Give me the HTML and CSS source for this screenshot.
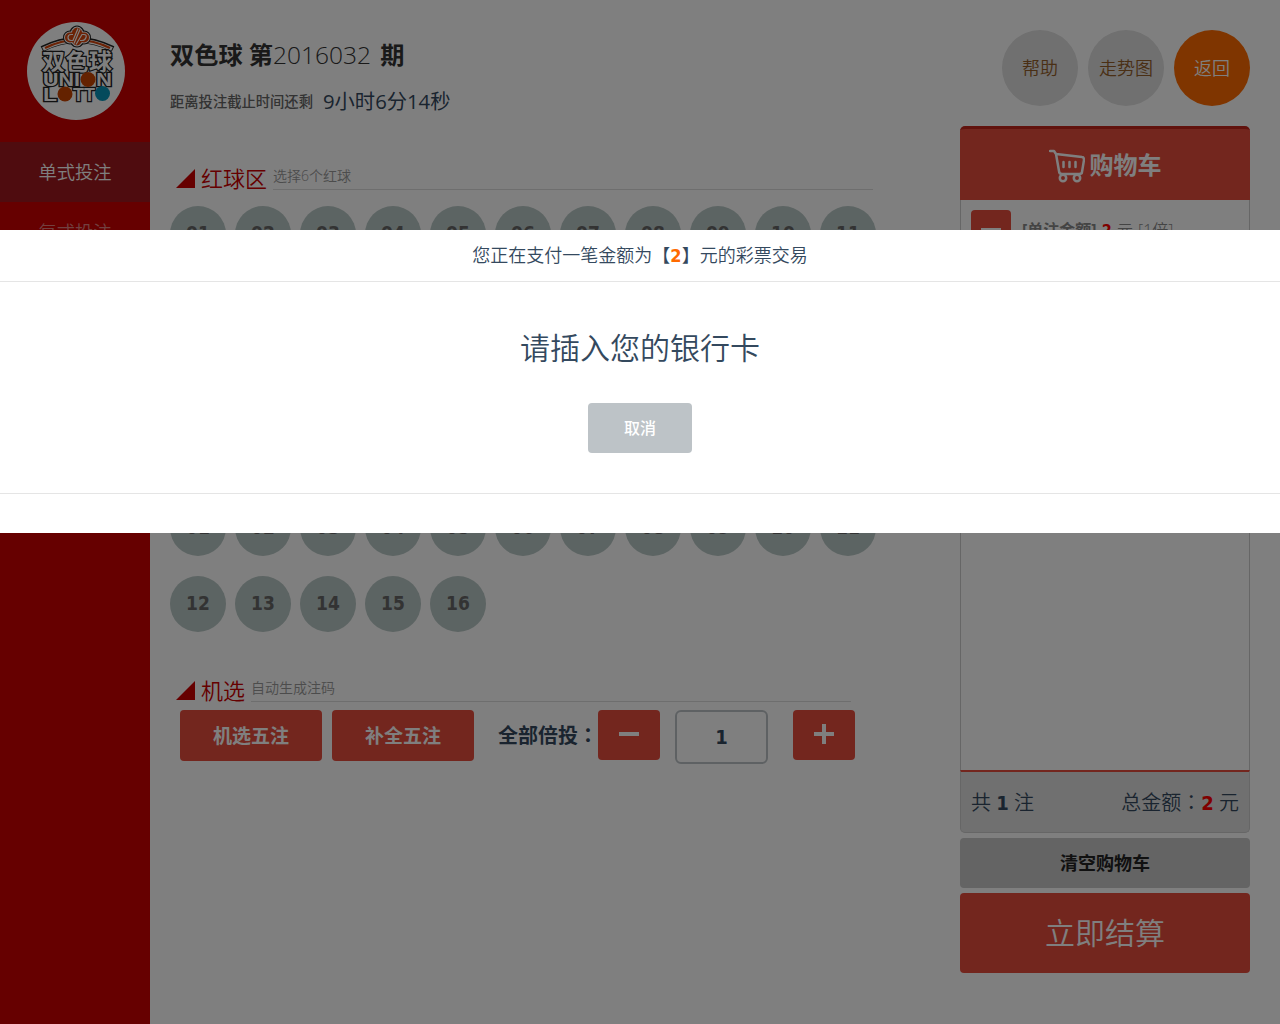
FILE: index.html
```html
<!DOCTYPE html>
<html lang="zh-CN">
    <head>
        <meta charset="utf-8">
        <title>双色球</title>
        <link rel="stylesheet" href="styles.css">
    </head>
    <body>
        <div class="page">
            <div class="sidebar">
                <div class="logo">
                    <svg width="98" height="98" viewBox="0 0 98 98">
                        <circle cx="49" cy="49" r="49" fill="#fff"/>
                        <path d="M15 27Q50 9 86 27" fill="none" stroke="#222" stroke-width="6"/>
                        <path d="M16 27Q50 10 85 27" fill="none" stroke="#fff" stroke-width="4"/>
                        <path d="M18 26Q50 10 83 26" fill="none" stroke="#d8460c" stroke-width="2"/>
                        <text class="logo-cn" x="50" y="48" text-anchor="middle" textLength="70">双色球</text>
                        <g transform="translate(0 2.500)">
                            <g fill="#222" stroke="#222" stroke-width="5">
                                <circle cx="43" cy="13" r="4.500"/><circle cx="57" cy="13" r="4.500"/><ellipse cx="50" cy="12" rx="6" ry="8.500"/>
                            </g>
                            <g fill="#fff" stroke="#fff" stroke-width="2">
                                <circle cx="43" cy="13" r="5"/><circle cx="57" cy="13" r="5"/><ellipse cx="50" cy="12" rx="6" ry="9"/>
                            </g>
                            <g fill="#d8460c">
                                <circle cx="43" cy="13" r="5"/><circle cx="57" cy="13" r="5"/><ellipse cx="50" cy="12" rx="6" ry="9"/>
                            </g>
                            <path d="M46 10h-2q-3 0-3 3t3 3h2l5-12M49 20l6-10h2q3 0 2 3t-4 3h-2M47 19l6-14" fill="none" stroke="#fff" stroke-width="1.200"/>
                        </g>
                        <text class="logo-en" x="16" y="64" textLength="37" lengthAdjust="spacingAndGlyphs">UNI</text>
                        <text class="logo-en" x="69" y="64" textLength="16" lengthAdjust="spacingAndGlyphs">N</text>
                        <text class="logo-en" x="16" y="79" textLength="14" lengthAdjust="spacingAndGlyphs">L</text>
                        <text class="logo-en" x="46" y="79" textLength="22" lengthAdjust="spacingAndGlyphs">TT</text>
                        <circle cx="61" cy="57.500" r="7.500" fill="#c84500"/>
                        <circle cx="38" cy="72" r="7.500" fill="#c84500"/>
                        <circle cx="75.500" cy="71.500" r="7.500" fill="#0895b8"/>
                    </svg>
                </div>
                <div class="nav active">单式投注</div>
                <div class="nav">复式投注</div>
            </div>
            <div class="main">
                <div class="issue">双色球 第<span>2016032</span> 期</div>
                <div class="time">距离投注截止时间还剩<span>9小时6分14秒</span></div>

                <div class="title"><i></i><b>红球区</b><span>选择6个红球</span></div>
                <div class="balls">
                    <div>01</div><div>02</div><div>03</div><div>04</div><div>05</div><div>06</div><div>07</div><div>08</div><div>09</div><div>10</div><div>11</div>
                    <div>12</div><div>13</div><div>14</div><div>15</div><div>16</div><div>17</div><div>18</div><div>19</div><div>20</div><div>21</div><div>22</div>
                    <div>23</div><div>24</div><div>25</div><div>26</div><div>27</div><div>28</div><div>29</div><div>30</div><div>31</div><div>32</div><div>33</div>
                </div>

                <div class="title"><i></i><b>蓝球区</b><span>选择1个蓝球</span></div>
                <div class="balls">
                    <div>01</div><div>02</div><div>03</div><div>04</div><div>05</div><div>06</div><div>07</div><div>08</div><div>09</div><div>10</div><div>11</div>
                    <div>12</div><div>13</div><div>14</div><div>15</div><div>16</div>
                </div>

                <div class="title"><i></i><b>机选</b><span>自动生成注码</span></div>
                <div class="tools">
                    <div class="btn">机选五注</div>
                    <div class="btn">补全五注</div>
                    <div class="label">全部倍投<span class="colon" lang="zh-TW">：</span></div>
                    <div class="step"><svg width="22" height="22"><path d="M1 11h20" stroke="#fff" stroke-width="4"/></svg></div>
                    <div class="num">1</div>
                    <div class="step"><svg width="22" height="22"><path d="M1 11h20M11 1v20" stroke="#fff" stroke-width="4"/></svg></div>
                </div>
            </div>
            <div class="side">
                <div class="links">
                    <div>帮助</div>
                    <div>走势图</div>
                    <div class="back">返回</div>
                </div>
                <div class="cart-head">
                    <svg width="36" height="34" viewBox="0 0 36 34" fill="none" stroke="#fff" stroke-width="2.500" stroke-linecap="round" stroke-linejoin="round">
                        <path d="M1 2h4l2 3 26 3q2 0 2 3l-2 12q0 2-3 2H13q-3 0-3-3L7 5"/>
                        <path d="M14.500 13v5M20.500 13v5M26.500 13v5"/>
                        <circle cx="14" cy="29" r="3.200"/>
                        <circle cx="28" cy="29" r="3.200"/>
                    </svg>
                    <span>购物车</span>
                </div>
                <div class="cart-list">
                    <div class="order">
                        <div class="del"><svg width="20" height="20"><path d="M0 10h20" stroke="#fff" stroke-width="4"/></svg></div>
                        <div class="info"><b>[单注金额]</b> <em>2</em> 元 [1倍]</div>
                    </div>
                </div>
                <div class="cart-total">
                    <div>共 <b>1</b> 注</div>
                    <div>总金额<span class="colon" lang="zh-TW">：</span><em>2</em> 元</div>
                </div>
                <div class="clear">清空购物车</div>
                <div class="pay">立即结算</div>
            </div>
        </div>

        <div class="mask"></div>
        <div class="dialog">
            <div class="dialog-head">您正在支付一笔金额为【<em>2</em>】元的彩票交易</div>
            <div class="dialog-body">
                <div class="tip">请插入您的银行卡</div>
                <div class="cancel">取消</div>
            </div>
        </div>
    </body>
</html>
```
FILE: styles.css
```css
* {margin: 0px;padding: 0px;box-sizing: border-box;}
body {font-family: "Open Sans","Noto Sans CJK SC",sans-serif;font-size: 18px;font-weight: 350;color: #34495e;background-color: #fff;overflow: hidden;}
em {font-family: "DejaVu Sans Condensed","DejaVu Sans",sans-serif;font-size: 1em;line-height: 1;font-style: normal;font-weight: bold;color: #f00;}
.colon {font-family: "Noto Sans CJK TC",sans-serif;line-height: 1;}
.page {display: flex;width: 1280px;height: 1024px;}

.sidebar {width: 150px;background-color: #c00;}
.logo {height: 142px;padding: 22px 0px 0px 27px;}
.logo svg {display: block;}
.logo-cn {font-size: 23px;font-weight: bold;fill: #fff;stroke: #222;stroke-width: 2.500px;paint-order: stroke;}
.logo-en {font-family: "Liberation Sans",sans-serif;font-size: 18px;font-weight: bold;fill: #fff;stroke: #222;stroke-width: 2.500px;paint-order: stroke;}
.nav {height: 60px;line-height: 60px;text-align: center;font-size: 18.300px;color: #e58080;}
.nav.active {background-color: #9e181e;color: #fff;}

.main {width: 810px;padding-left: 20px;}
.issue {height: 36px;line-height: 36px;margin-top: 37px;font-size: 24.200px;font-weight: bold;color: #333;}
.issue span {font-weight: 350;font-size: 24.500px;margin-right: 3px;}
.time {display: flex;height: 30px;line-height: 30px;margin: 14px 0px 43px;font-size: 14.300px;font-weight: 500;color: #666;}
.time span {margin-left: 10px;line-height: 29px;font-size: 20.300px;font-weight: 400;color: #34495e;}

.title {display: flex;height: 30px;padding-left: 6px;}
.title i {width: 19px;height: 19px;margin: 9px 6px 0px 0px;background-color: #c00;clip-path: polygon(100% 0,100% 100%,0 100%);}
.title b {font-size: 22px;font-weight: 350;line-height: 36px;color: #c00;margin-right: 6px;}
.title span {width: 600px;height: 30px;line-height: 32px;border-bottom: 1px solid #ddd;font-size: 14px;color: #999;}
.balls {display: flex;flex-wrap: wrap;gap: 20px 9px;width: 710px;margin: 16px 0px 40px;}
.balls div {width: 56px;height: 56px;line-height: 55px;border-radius: 50%;background-color: #b9c8c6;text-align: center;font-family: "DejaVu Sans Condensed","DejaVu Sans",sans-serif;font-size: 19px;font-weight: bold;color: #666;}

.tools {display: flex;margin-top: 8px;padding-left: 10px;}
.btn {width: 142px;height: 51px;line-height: 52px;margin-right: 10px;border-radius: 4px;background-color: #e74c3c;color: #fff;text-align: center;font-size: 19px;font-weight: bold;}
.label {width: 100px;margin-left: 14px;line-height: 51px;font-size: 20px;font-weight: bold;white-space: nowrap;}
.step {display: flex;align-items: center;justify-content: center;width: 62px;height: 50px;padding-bottom: 2px;border-radius: 4px;background-color: #e74c3c;}
.num {width: 93px;height: 54px;line-height: 51px;margin: 0px 25px 0px 15px;border: 2px solid #bdc3c7;border-radius: 6px;text-align: center;font-family: "DejaVu Sans Condensed","DejaVu Sans",sans-serif;font-size: 20px;font-weight: bold;}

.side {width: 290px;}
.links {display: flex;justify-content: flex-end;gap: 10px;margin: 30px 0px 20px;}
.links div {width: 76px;height: 76px;line-height: 76px;border-radius: 50%;background-color: #e0e0e0;color: #945e2a;text-align: center;}
.links .back {background-color: #ff6a00;color: #fff;}
.cart-head {display: flex;align-items: center;justify-content: center;gap: 5px;height: 74px;padding-top: 2px;border-top: 3px solid #c2241a;border-radius: 5px 5px 0px 0px;background-color: #e74c3c;color: #fff;font-size: 24px;font-weight: bold;}
.cart-head span {line-height: 34px;padding-bottom: 2px;}
.cart-list {height: 570px;padding: 10px;border: 1px solid #ccc;border-width: 0px 1px;}
.order {display: flex;gap: 11px;}
.del {display: flex;align-items: center;justify-content: center;width: 40px;height: 40px;border-radius: 4px;background-color: #e74c3c;}
.info {line-height: 40px;font-size: 16px;word-spacing: 1px;color: #888;}
.cart-total {display: flex;justify-content: space-between;height: 63px;line-height: 61px;padding: 0px 10px;border: 1px solid #ccc;border-top: 2px solid #e74c3c;border-radius: 0px 0px 5px 5px;background-color: #e0e0e0;font-size: 20px;}
.cart-total b {font-family: "DejaVu Sans Condensed","DejaVu Sans",sans-serif;font-size: 20px;line-height: 1;font-weight: bold;}
.clear {height: 50px;line-height: 50px;margin: 5px 0px;border-radius: 4px;background-color: #c8c8c8;color: #222;text-align: center;font-weight: bold;}
.pay {height: 80px;line-height: 79px;border-radius: 4px;background-color: #e74c3c;color: #fff;text-align: center;font-size: 30px;}

.mask {position: fixed;top: 0px;left: 0px;width: 100%;height: 100%;background-color: rgba(0,0,0,0.5);}
.dialog {position: fixed;top: 230px;left: 0px;width: 100%;height: 303px;background-color: #fff;text-align: center;}
.dialog-head {height: 52px;line-height: 51px;border-bottom: 1px solid #e5e5e5;}
.dialog-head em {color: #ff6a00;}
.dialog-body {height: 212px;border-bottom: 1px solid #e5e5e5;padding-top: 41px;}
.tip {height: 50px;line-height: 50px;margin-bottom: 30px;font-size: 30px;}
.cancel {width: 104px;height: 50px;line-height: 50px;margin: 0 auto;border-radius: 4px;background-color: #bdc3c7;color: #fff;font-size: 16px;font-weight: 500;}
```
